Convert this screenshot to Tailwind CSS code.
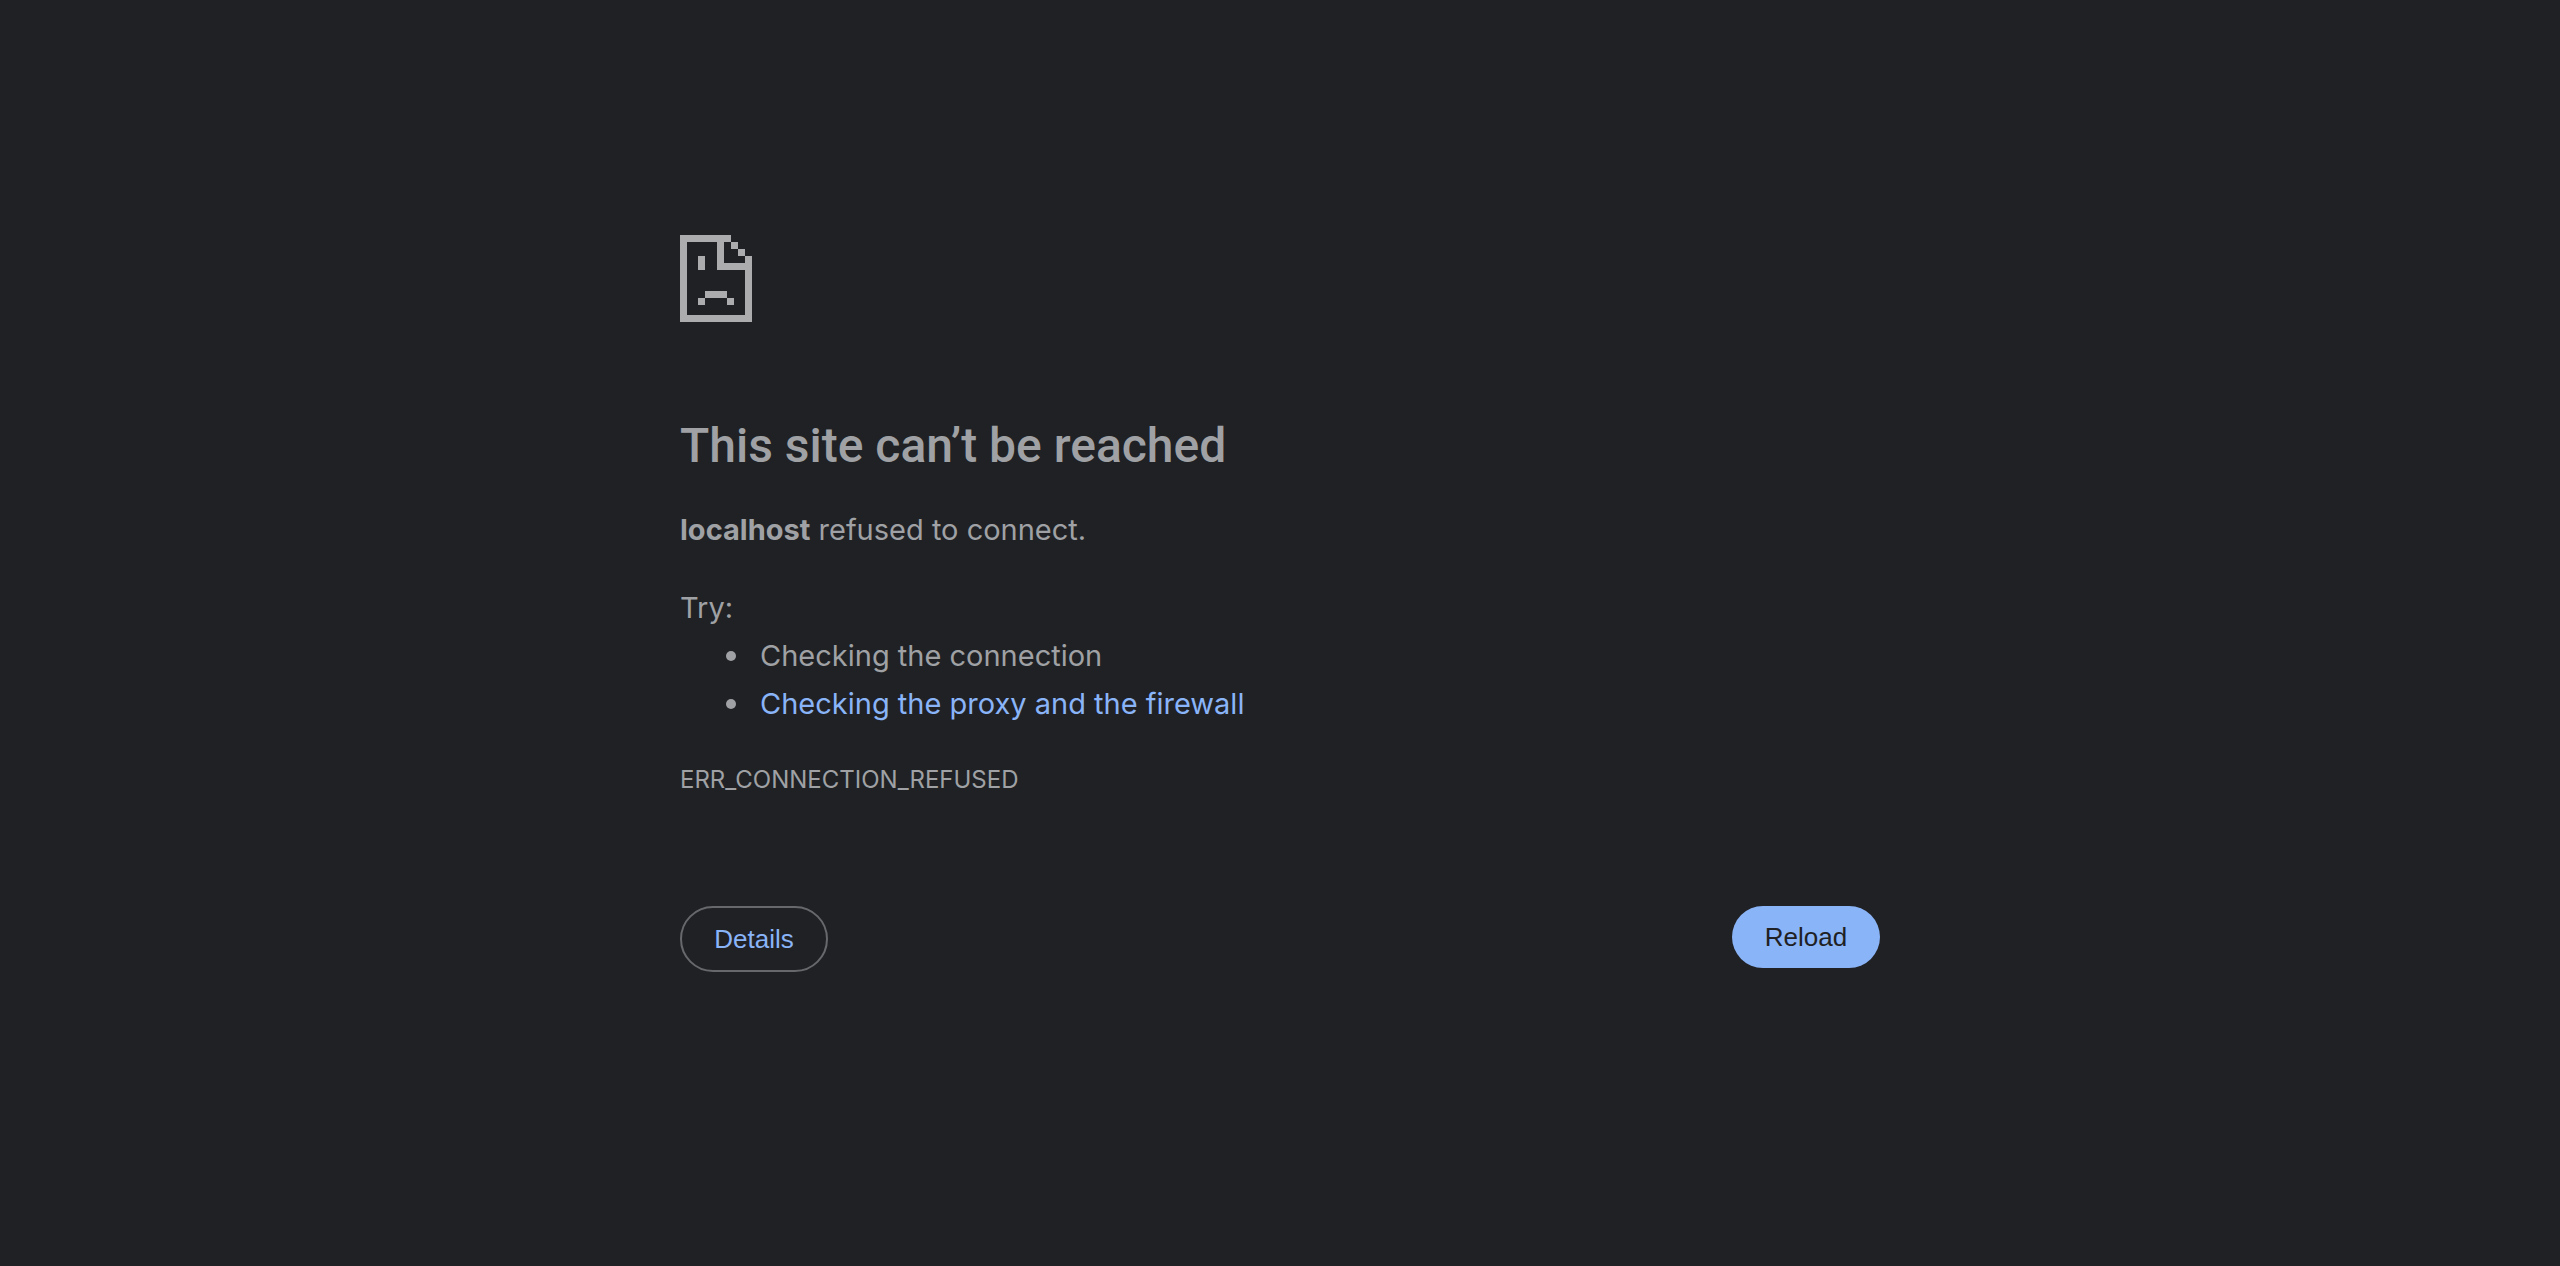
<!DOCTYPE html>
<html lang="en">
<head>
  <meta charset="UTF-8">
  <meta name="viewport" content="width=device-width, initial-scale=1.0">
  <title>localhost</title>
  <script src="https://cdn.jsdelivr.net/npm/@tailwindcss/browser@4"></script>
</head>
<body class="bg-[#202124] text-[#9fa1a4] min-h-screen font-['Inter','Liberation_Sans',sans-serif]">
  <main class="max-w-[1200px] mx-auto pt-[235px] pb-12">
    <!-- Sad page icon -->
    <svg class="block w-[72px] h-[87px]" viewBox="0 0 72 87" fill="#acacae" shape-rendering="crispEdges" aria-hidden="true">
      <path d="M0 0H51V7H44V28H65V21H72V87H0ZM7 7V80H65V35H37V7Z" fill-rule="evenodd"/>
      <path d="M51 7H58V14H51ZM58 14H65V21H58Z"/>
      <path d="M18 21H25V35H18Z"/>
      <path d="M25 56H47V63H25ZM18 63H25V70H18ZM47 63H54V70H47Z"/>
    </svg>

    <h1 class="mt-[94px] text-[48px] leading-[60px] font-medium font-['Roboto','Inter',sans-serif]">This site can’t be reached</h1>
    <p class="mt-[30px] text-[29px] leading-[48px]"><strong class="font-bold">localhost</strong> refused to connect.</p>

    <div class="mt-[30px] text-[29px] leading-[48px]">
      <p>Try:</p>
      <ul>
        <li class="flex items-center before:size-[10px] before:ml-[46px] before:mr-6 before:rounded-full before:bg-[#9fa1a4]">Checking the connection</li>
        <li class="flex items-center before:size-[10px] before:ml-[46px] before:mr-6 before:rounded-full before:bg-[#9fa1a4]"><a href="#buttons" class="text-[#8ab4f8]">Checking the proxy and the firewall</a></li>
      </ul>
    </div>

    <p class="mt-[30px] text-[24px] leading-[44px]">ERR_CONNECTION_REFUSED</p>

    <!-- Buttons -->
    <div id="buttons" class="mt-[104px] flex items-start justify-between font-['Liberation_Sans',sans-serif] text-[26px] leading-[30px]">
      <button type="button" class="min-w-[148px] rounded-full border-2 border-[#66686c] px-8 py-4 text-[#8ab4f8]">Details</button>
      <button type="button" class="min-w-[148px] rounded-full bg-[#8ab4f8] px-8 py-4 text-[#202124]">Reload</button>
    </div>
  </main>
</body>
</html>
